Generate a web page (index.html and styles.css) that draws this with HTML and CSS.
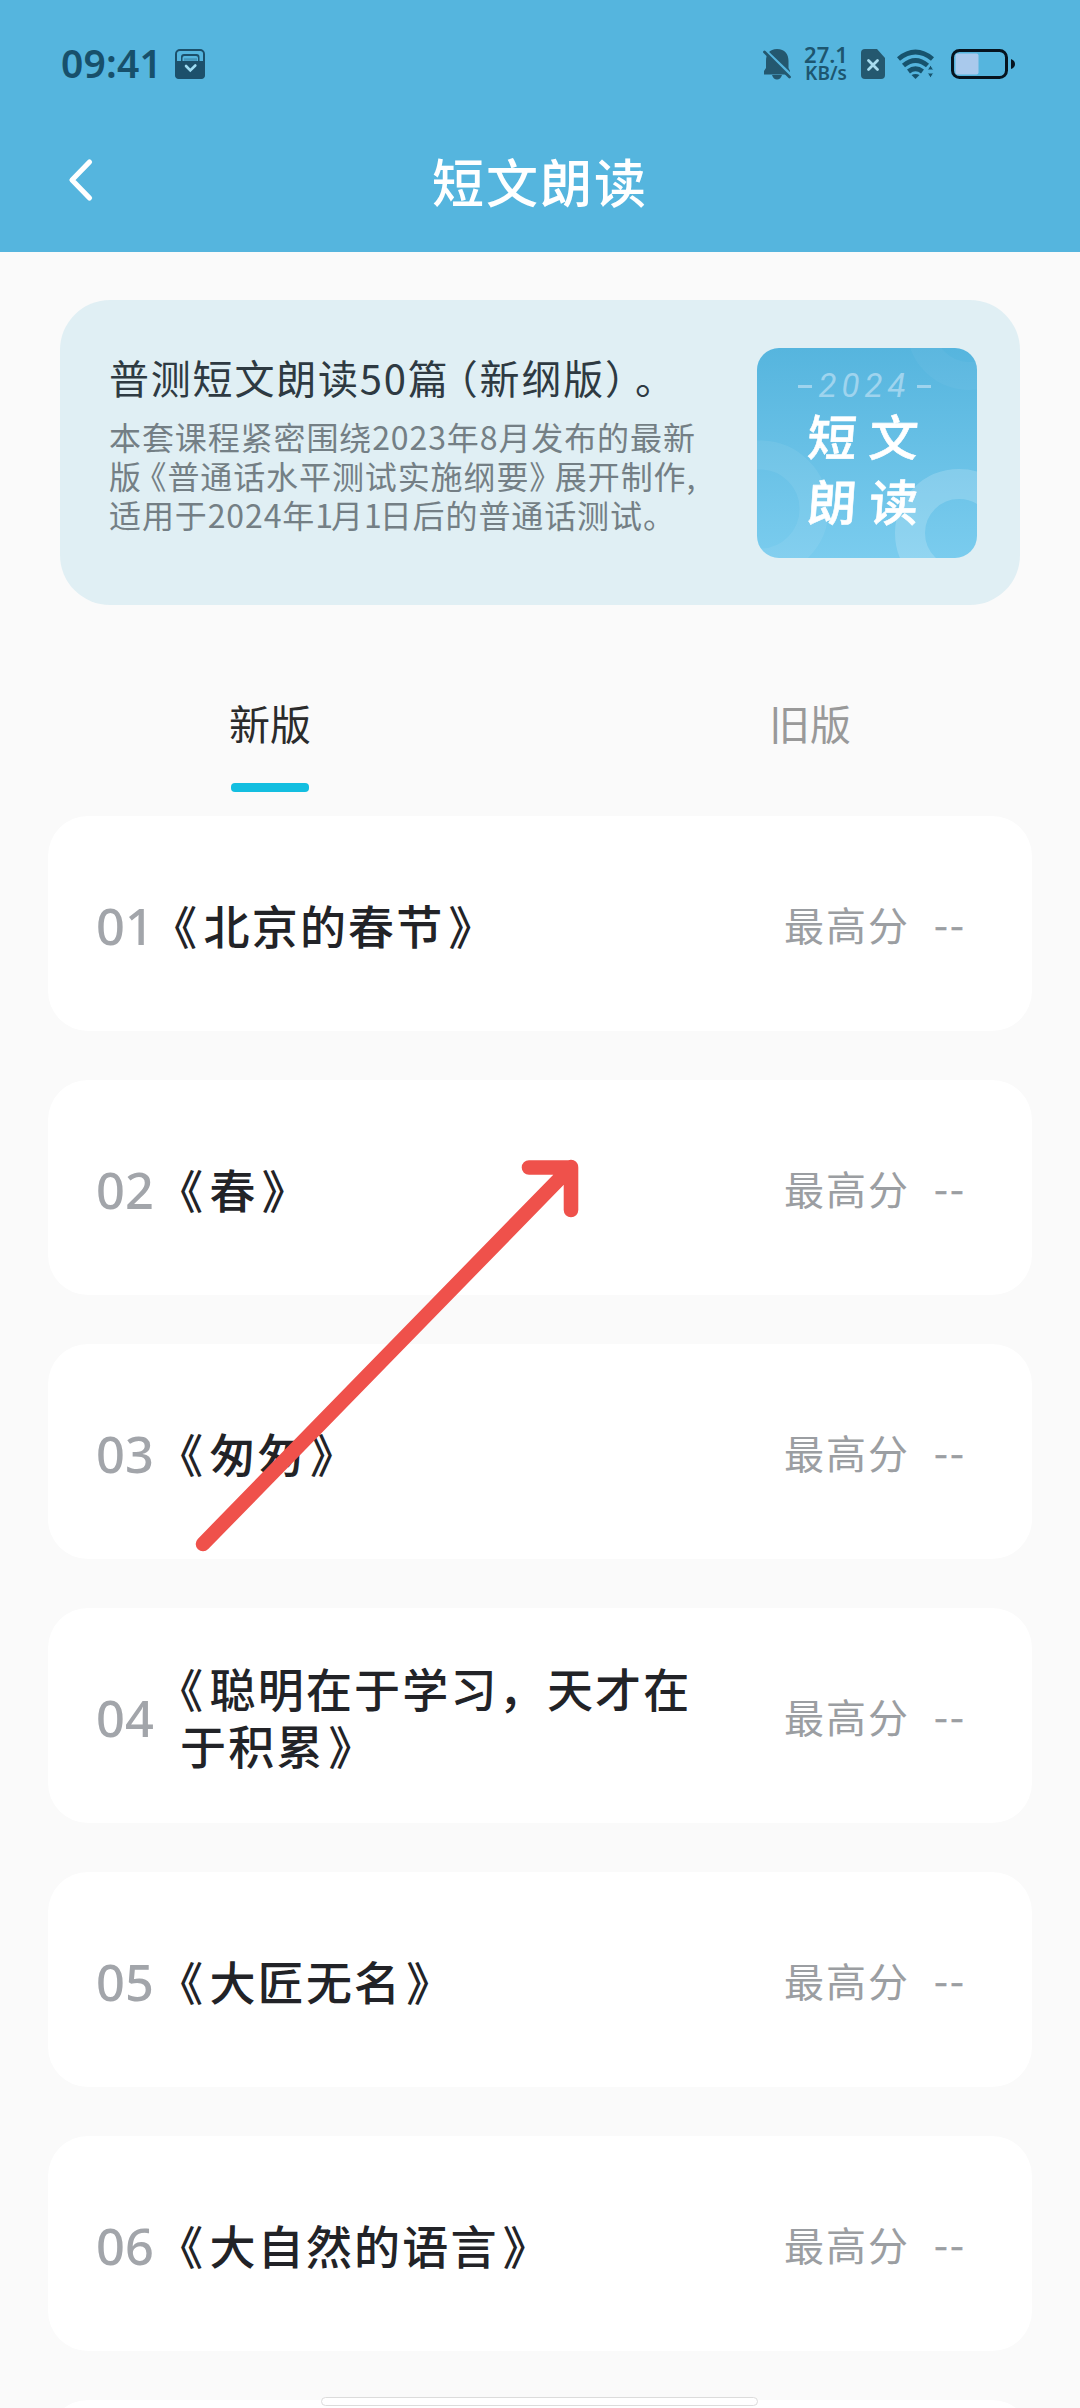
FILE: index.html
```html
<!DOCTYPE html>
<html lang="zh-CN">
<head>
<meta charset="utf-8">
<title>短文朗读</title>
<link rel="stylesheet" href="styles.css">
</head>
<body>
<div class="screen">
  <header class="header">
    <div class="status">
      <span class="time">09:41</span>
      <svg class="ic-app" width="30" height="30" viewBox="0 0 30 30"><rect x="1" y="1" width="28" height="28" rx="4" fill="none" stroke="#1c506b" stroke-width="2"/><path d="M0 12H6V8q0-3 3-3H21.500q3 0 3 3v4H30V26q0 4-4 4H4q-4 0-4-4Z" fill="#1c506b"/><path d="M7.500 12V9q0-2 2-2H21q2 0 2 2v3Z" fill="#55b5de"/><path d="M3 12V6q0-2.500 2.500-2.500h19Q27 3.500 27 6v6" fill="none" stroke="#55b5de" stroke-width="2"/><path d="M9 10.500h13" stroke="#1c506b" stroke-width="2.500" opacity=".3"/><path d="m11 17 4.300 4.500 5-5" fill="none" stroke="#9fdcf2" stroke-width="2.600" stroke-linecap="round"/></svg>
      <div class="status-right">
        <svg width="28" height="31" viewBox="0 0 28 31"><path d="M14 0c8 0 11.500 5 11.500 12v7l1.500 3v3.500H1V22l2-3v-7C3 5 6.500 0 14 0Z" fill="#24586f"/><path d="M9 26h10q-1.500 4.500-5 4.500T9 26Z" fill="#24586f"/><path d="m1 .5 27 26" stroke="#55b5de" stroke-width="3.500"/><path d="m1.500 3 25 25" stroke="#24586f" stroke-width="2.800" stroke-linecap="round"/></svg>
        <span class="speed"><b>27.1</b><i>KB/s</i></span>
        <svg class="ic-sim" width="24" height="30" viewBox="0 0 24 30"><path d="M4 0h12l8 9v17q0 4-4 4H4q-4 0-4-4V4Q0 0 4 0Z" fill="#24586f"/><path d="m7.500 11.500 9 9m0-9-9 9" stroke="#a8dcef" stroke-width="2.800" stroke-linecap="round"/></svg>
        <svg class="ic-wifi" width="37" height="30" viewBox="0 0 37 30"><g fill="none" stroke="#17536d" stroke-width="4.800"><path d="M1.500 10q17-14 34 0"/><path d="M6.500 16.500q12-10 24 0"/><path d="M11.500 22.500q7-5.500 14 0"/></g><path d="M14.500 26q4-2 8 0l-4 4Z" fill="#17536d"/><path d="m33.500 16 3.200 5h-6.400ZM33.500 29l3.200-5h-6.400Z" fill="#17536d" stroke="#55b5de" stroke-width="1"/></svg>
        <svg class="ic-bat" width="65" height="30" viewBox="0 0 65 30"><rect x="4.500" y="4.500" width="23" height="21" rx="2" fill="#a9c9ec"/><rect x="1.500" y="1.500" width="54" height="27" rx="7" fill="none" stroke="#06141f" stroke-width="3"/><path d="M60 10q4 1.500 4 5t-4 5Z" fill="#06141f"/></svg>
      </div>
    </div>
    <div class="nav">
      <svg width="26" height="44" viewBox="0 0 26 44"><path d="M21.500 4 4 22l17.500 18" fill="none" stroke="#fff" stroke-width="5.200" stroke-linecap="round" stroke-linejoin="round"/></svg>
      <h1 class="nav-title">短文朗读</h1>
    </div>
  </header>

  <section class="course">
    <div class="course-text">
      <h2 class="course-title">普测短文朗读50<span class="tight">篇</span>（新纲版<span class="tight">）</span>。</h2>
      <p class="course-desc">本套课程紧密围绕2023年8月发布的最新<br><span class="snug">版</span>《普通话水平测试实施纲要<span class="snug">》</span>展开制作,<br>适用于2024年<span class="one">1</span>月<span class="one">1</span>日后的普通话测试。</p>
    </div>
    <div class="cover">
      <svg class="cover-art" width="220" height="210" viewBox="0 0 220 210"><g fill="none" stroke="#fff"><circle cx="3" cy="161" r="54" stroke-width="29" opacity=".07"/><circle cx="202" cy="185" r="49" stroke-width="30" opacity=".18"/><circle cx="212" cy="-20" r="48" stroke-width="28" opacity=".04"/></g></svg>
      <span class="cover-year"><i></i>2024<i></i></span>
      <span class="cover-name">短文</span>
      <span class="cover-name">朗读</span>
    </div>
  </section>

  <nav class="tabs">
    <span class="tab tab-on">新版</span>
    <span class="tab">旧版</span>
  </nav>

  <main class="list">
    <article class="row row-first"><span class="num">01</span><span class="name"><span class="open">《</span>北京的春节<span class="close">》</span></span><span class="best">最高分</span><span class="score">--</span></article>
    <article class="row"><span class="num">02</span><span class="name"><span class="open">《</span>春<span class="close">》</span></span><span class="best">最高分</span><span class="score">--</span></article>
    <article class="row"><span class="num">03</span><span class="name"><span class="open">《</span>匆匆<span class="close">》</span></span><span class="best">最高分</span><span class="score">--</span></article>
    <article class="row"><span class="num">04</span><span class="name"><span class="open">《</span>聪明在于学习，天才在<br>于积累<span class="close">》</span></span><span class="best">最高分</span><span class="score">--</span></article>
    <article class="row"><span class="num">05</span><span class="name"><span class="open">《</span>大匠无名<span class="close">》</span></span><span class="best">最高分</span><span class="score">--</span></article>
    <article class="row"><span class="num">06</span><span class="name"><span class="open">《</span>大自然的语言<span class="close">》</span></span><span class="best">最高分</span><span class="score">--</span></article>
    <article class="row"></article>
  </main>

  <svg class="pointer" width="400" height="410" viewBox="0 0 400 410"><path d="M13 394 381 17M339 17.500H381V60" fill="none" stroke="#ef514b" stroke-width="14.600" stroke-linecap="round" stroke-linejoin="round"/></svg>
  <div class="home-bar"></div>
</div>
</body>
</html>
```
FILE: styles.css
```css
* { box-sizing: border-box; }
body { margin: 0; background: #fafafa; font-family: "Noto Sans CJK SC", sans-serif; text-spacing-trim: space-all; }
h1, h2, p { margin: 0; font-weight: 400; }
svg { display: block; flex: none; }
.screen { position: relative; width: 1080px; height: 2408px; overflow: hidden; background: #fafafa; }

.header { height: 252px; background: #55b5de; }
.status { display: flex; align-items: center; height: 128px; padding: 0 64px 0 61px; }
.time { width: 114px; padding-bottom: 2px; font: 600 39px/50px "Noto Sans", sans-serif; color: #17506b; letter-spacing: 0.200px; white-space: nowrap; }
.status-right { display: flex; align-items: center; margin-left: auto; }
.speed { display: flex; flex-direction: column; align-items: center; width: 48px; margin-left: 11px; color: #1d5670; font-family: "Noto Sans", sans-serif; }
.speed b { font-size: 22px; line-height: 19px; font-weight: 600; }
.speed i { font-size: 19px; line-height: 19px; font-style: normal; font-weight: 600; }
.ic-sim { margin-left: 11px; }
.ic-wifi { margin-left: 12px; }
.ic-bat { margin-left: 17px; }
.nav { display: flex; align-items: center; height: 104px; padding-left: 68px; }
.nav-title { margin-left: 338px; padding-top: 1px; font-size: 52px; line-height: 76px; font-weight: 500; color: #fff; letter-spacing: 2px; }

.course { display: flex; justify-content: space-between; width: 960px; height: 305px; margin: 48px 60px 0; padding: 48px 43px 0 49px; border-radius: 50px; background: #e0eff4; }
.course-text { white-space: nowrap; }
.course-title { margin-top: -1px; font-size: 40px; line-height: 60px; letter-spacing: 1.800px; color: #2e3a42; }
.tight { letter-spacing: -10px; }
.course-desc { margin-top: 10px; font-size: 32px; line-height: 39px; letter-spacing: 0.900px; color: #747f85; }
.snug { letter-spacing: -6.500px; }
.one { letter-spacing: -2px; }
.cover { position: relative; display: flex; flex-direction: column; align-items: center; width: 220px; height: 210px; padding-top: 21px; border-radius: 22px; overflow: hidden; background: linear-gradient(#56b5de, #7accee); }
.cover-art { position: absolute; inset: 0; }
.cover-year { display: flex; align-items: center; gap: 7px; margin-left: -5px; font: italic 400 33px/34px Roboto, sans-serif; letter-spacing: 5px; color: #9fd4ee; }
.cover-year i { width: 14px; height: 3px; background: #9fd4ee; }
.cover-name { position: relative; padding-left: 5px; font-size: 49px; line-height: 65px; font-weight: 500; letter-spacing: 12.500px; color: #fff; -webkit-text-stroke: 0.600px #fff; transform: skewX(-4deg); }
.cover-year + .cover-name { margin-top: -1px; }

.tabs { display: flex; height: 211px; }
.tab { display: flex; flex-direction: column; align-items: center; flex: 1; padding-top: 87px; font-size: 41px; line-height: 60px; color: #999; }
.tab-on { color: #2b2b2b; }
.tab-on::after { content: ""; width: 78px; height: 9px; margin-top: 31px; border-radius: 4px; background: #13bee0; }

.list { display: flex; flex-direction: column; gap: 49px; padding: 0 48px; }
.row { display: flex; align-items: center; flex: none; height: 215px; padding: 1px 63px 0 48px; border-radius: 40px; background: #fff; }
.num { width: 84px; padding-top: 3px; font: 500 50.500px/60px "Noto Sans", sans-serif; color: #a2a5aa; }
.row-first .num { width: 78px; }
.name { flex: 1; font-size: 46px; line-height: 57px; font-weight: 500; letter-spacing: 2.200px; text-indent: -23px; color: #222327; white-space: nowrap; }
.open { letter-spacing: 6.500px; }
.close { margin-left: 4px; }
.best { font-size: 40px; letter-spacing: 2px; color: #9b9ea2; }
.score { width: 59px; padding: 0 0 3px 24px; font-size: 40px; letter-spacing: 2px; color: #9b9ea2; white-space: nowrap; -webkit-text-stroke: 0.500px #9b9ea2; }

.pointer { position: absolute; left: 190px; top: 1150px; }
.home-bar { position: absolute; left: 321px; top: 2397px; width: 437px; height: 9px; border: 1px solid #dcdcdc; border-radius: 5px; background: #fff; }
```
